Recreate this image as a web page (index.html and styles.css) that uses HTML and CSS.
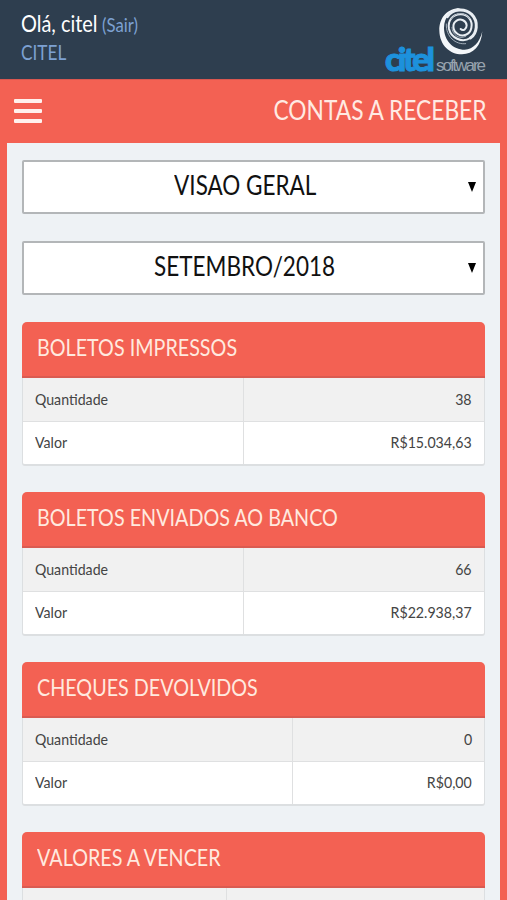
FILE: index.html
```html
<!DOCTYPE html>
<html lang="pt-BR">
<head>
<meta charset="utf-8">
<title>Contas a receber</title>
<link rel="stylesheet" href="styles.css">
</head>
<body>
<header class="top">
  <div class="user">
    <div class="hello"><span class="greet">Olá, citel</span><a class="exit">(Sair)</a></div>
    <div class="company"><span>CITEL</span></div>
  </div>
  <svg class="logo" width="106" height="74" viewBox="0 0 106 74">
    <g transform="translate(48 -4) scale(.3333)">
      <path fill="#f4f7fa" d="M92 24C52 24 27 53 28 92C29 134 58 163 96 163C130 163 154 138 157 94C149 128 130 148 104 149C69 149 42 121 42 83C43 50 62 32 92 24Z"/>
      <g fill="none" stroke="#e9eef3" stroke-linecap="round">
        <path stroke-width="9" d="M52 50C68 26 104 23 125 43C147 65 141 101 121 114"/>
        <path stroke-width="6" d="M121 114C95 130 63 113 57 87C52 61 69 43 91 43C114 42 129 62 124 84C120 104 98 112 83 102C67 91 66 71 80 62C92 54 109 62 110 76C110 88 99 94 92 87"/>
        <path stroke="#a5b0bb" stroke-width="3" d="M49 72C47 110 77 135 107 131M63 57C77 35 106 36 118 55M66 82C66 105 88 119 107 109"/>
      </g>
    </g>
    <text class="logo-main" x="3" y="66.5" textLength="50" lengthAdjust="spacing">citel</text>
    <text class="logo-sub" x="54" y="67" textLength="50" lengthAdjust="spacing">software</text>
  </svg>
</header>
<div class="bar">
  <div class="menu"><i></i><i></i><i></i></div>
  <h1><span>CONTAS A RECEBER</span></h1>
</div>
<main>
  <div class="select"><span class="view">VISAO GERAL</span><i class="arrow"></i></div>
  <div class="select"><span class="month">SETEMBRO/2018</span><i class="arrow"></i></div>
  <section class="card">
    <h2><span>BOLETOS IMPRESSOS</span></h2>
    <div class="row"><div><span>Quantidade</span></div><div><span>38</span></div></div>
    <div class="row"><div><span>Valor</span></div><div><span>R$15.034,63</span></div></div>
  </section>
  <section class="card">
    <h2><span>BOLETOS ENVIADOS AO BANCO</span></h2>
    <div class="row"><div><span>Quantidade</span></div><div><span>66</span></div></div>
    <div class="row"><div><span>Valor</span></div><div><span>R$22.938,37</span></div></div>
  </section>
  <section class="card wide">
    <h2><span>CHEQUES DEVOLVIDOS</span></h2>
    <div class="row"><div><span>Quantidade</span></div><div><span>0</span></div></div>
    <div class="row"><div><span>Valor</span></div><div><span>R$0,00</span></div></div>
  </section>
  <section class="card narrow">
    <h2><span>VALORES A VENCER</span></h2>
    <div class="row"><div></div><div></div></div>
  </section>
</main>
</body>
</html>
```
FILE: styles.css
```css
* { box-sizing: border-box; }
body { margin: 0; height: 900px; overflow: hidden; background: #f36153; font-family: Lato, "Liberation Sans", sans-serif; color: #444; }
span { display: inline-block; white-space: nowrap; transform-origin: left center; }
.top { height: 79px; background: #2e3e4f; display: flex; justify-content: space-between; padding: 4px 19px 0 21px; }
.user { padding-top: 5px; }
.hello { display: flex; height: 28px; line-height: 28px; font-size: 23px; color: #fff; }
.greet { width: 81px; transform: scaleX(.865); }
.exit { display: inline-block; font-size: 19px; color: #7da1d2; transform: scaleX(.88); transform-origin: left center; line-height: 31px; }
.company { font-size: 20.5px; line-height: 30px; color: #7da1d2; }
.company span { transform: scaleX(.84); }
.logo { overflow: visible; }
.logo-main { font: 900 33px Lato, sans-serif; fill: #1d91dc; stroke: #1d91dc; stroke-width: 1; }
.logo-sub { font: 400 17px "Liberation Sans", sans-serif; fill: #98a3ae; }
.bar { height: 64px; border-top: 1px solid #d95750; display: flex; justify-content: space-between; padding: 0 21px 0 14px; }
.menu { display: flex; flex-direction: column; gap: 6px; padding-top: 19px; }
.menu i { width: 28px; height: 4px; border-radius: 1px; background: #fff1ed; }
h1 { margin: 0; font-weight: 400; font-size: 26px; line-height: 60px; color: #ffeae3; }
h1 span { transform: scaleX(.875); transform-origin: right center; }
main { margin: 0 7px; height: 757px; background: #eef2f5; padding: 17px 15px 0; overflow: hidden; }
.select { position: relative; height: 54px; margin-bottom: 27px; border: 2px solid #b3b6b8; border-radius: 2px; background: #fff; color: #111; display: flex; justify-content: center; padding-right: 17px; font-size: 26px; line-height: 46px; }
.select span { transform: scaleX(.865); transform-origin: center; }
.arrow { position: absolute; right: 7px; top: 20px; border: 4.5px solid transparent; border-top: 10px solid #000; border-bottom: 0; }
.card { height: 144px; margin-bottom: 26px; border-radius: 5px 5px 3px 3px; border: 1px solid #dcdfe1; border-top: 0; border-bottom-width: 2px; background: #fff; }
h2 { margin: 0 -1px; height: 56px; padding-left: 15px; border-bottom: 2px solid #da5b51; border-radius: 5px 5px 0 0; background: #f36153; color: #ffe9df; font-weight: 400; font-size: 23.5px; line-height: 51px; }
h2 span { transform: scaleX(.84); }
.row { display: grid; grid-template-columns: 220px 1fr; height: 43px; line-height: 41px; font-size: 16px; }
.row + .row { border-top: 1px solid #dfe0e1; line-height: 40px; }
h2 + .row { background: #f1f1f1; }
.row div { padding: 0 12px; }
.row div + div { border-left: 1px solid #dfe0e1; text-align: right; }
.row span { transform: scaleX(.885); }
.row div + div span { transform-origin: right center; }
.wide .row { grid-template-columns: 269px 1fr; }
.narrow .row { grid-template-columns: 203px 1fr; }
```
